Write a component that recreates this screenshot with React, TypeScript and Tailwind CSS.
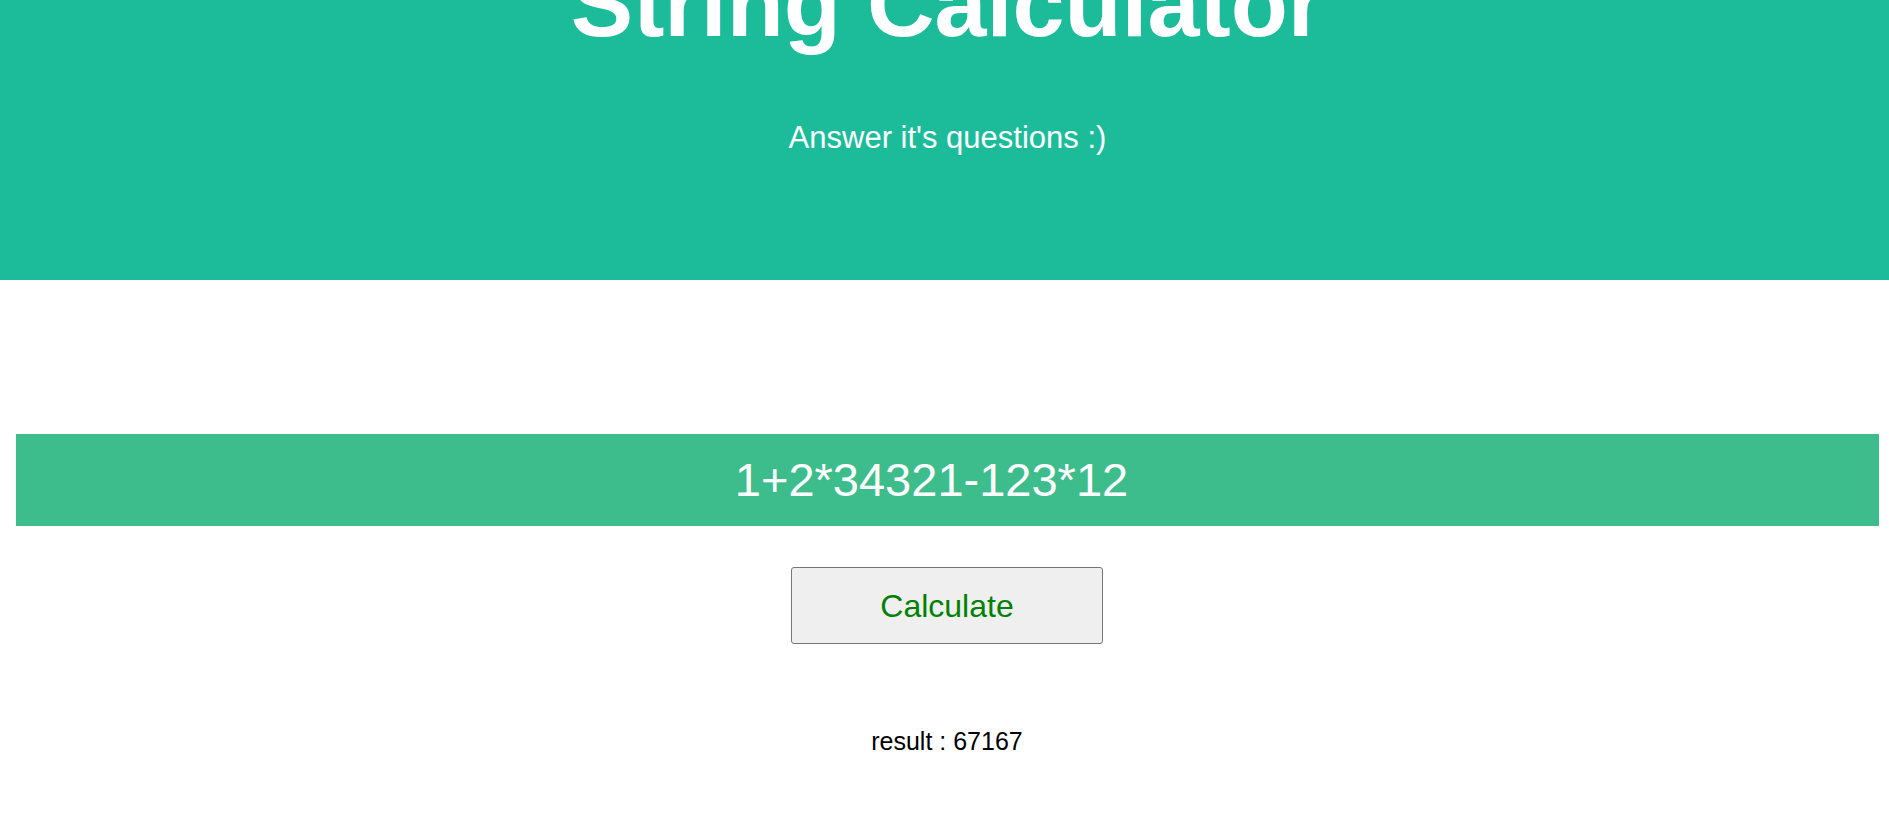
import { useState } from 'react'

const EXPRESSION = '1+2*34321-123*12'

export default function App() {
  const [result, setResult] = useState('67167')

  return (
    <div className="min-h-[839px] bg-white font-['Liberation_Sans',Arial,sans-serif] overflow-hidden">
      {/* Header */}
      <header className="h-[280px] bg-[#1cbc9b] text-white flex flex-col items-center">
        <h1 className="mt-[-43px] text-[93.5px] leading-none font-bold pl-[6px]">String Calculator</h1>
        <p className="mt-[71px] text-[31px] leading-none pl-[6px]">Answer it's questions :)</p>
      </header>

      {/* Expression */}
      <div className="mt-[154px] ml-[16px] mr-[10px] h-[92px] bg-[#3ebd8c] flex items-center justify-center pr-[32px]">
        <span className="text-[47px] text-white">{EXPRESSION}</span>
      </div>

      <div className="flex flex-col items-center pl-[5px]">
        <button
          className="mt-[41px] w-[312px] h-[77px] bg-[#efefef] border border-[#767676] rounded-[3px] text-[32px] text-[#008000]"
          onClick={() => setResult('67167')}
        >
          Calculate
        </button>
        <p className="mt-[79px] text-[25px] text-black">result : {result}</p>
      </div>
    </div>
  )
}
